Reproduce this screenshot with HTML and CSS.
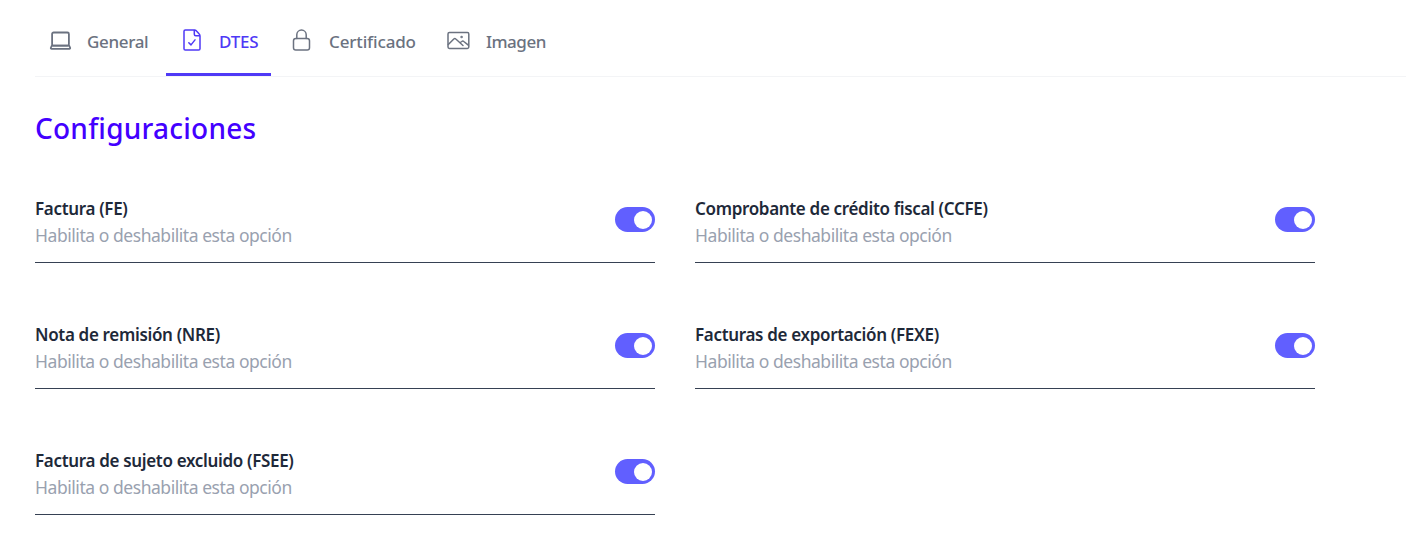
FILE: index.html
```html
<!DOCTYPE html>
<html lang="es">
<head>
<meta charset="utf-8">
<title>Configuraciones</title>
<link rel="stylesheet" href="styles.css">
</head>
<body>
<nav class="tabs">
  <a class="tab tab-general">
    <svg class="icon" viewBox="0 0 24 24"><rect x="4.100" y="4.500" width="16.800" height="13.200" rx="1.500" stroke-width="1.800"/><path d="M3.800 17.700h17.400l1 2.100q.3 1-.8 1H3.600q-1.100 0-.8-1z" stroke-width="1.700"/></svg>
    <span>General</span>
  </a>
  <a class="tab tab-dtes active">
    <svg class="icon" viewBox="0 0 24 24"><path d="M14.800 2H5.300Q4 2 4 3.300v17.400Q4 22 5.300 22h13.400Q20 22 20 20.700V8Q20 6.800 19 5.800L16.500 3Q15.700 2 14.400 2M14.300 2v4.300Q14.300 7.800 15.800 7.800H20M8.800 14.700l2.200 2.200 4-5"/></svg>
    <span>DTES</span>
  </a>
  <a class="tab tab-cert">
    <svg class="icon" viewBox="0 0 24 24"><rect x="3.500" y="10.500" width="16" height="11.500" rx="2.300"/><path d="M6.800 10.500V6.800a4.700 4.700 0 0 1 9.400 0v3.700"/></svg>
    <span>Certificado</span>
  </a>
  <a class="tab tab-img">
    <svg class="icon" viewBox="0 0 24 24"><rect x="2" y="4.500" width="20.800" height="16" rx="1.400"/><path d="M2.300 16.500l5.500-5.500q1-1 2 0l7.200 6.500M14.300 14.500l1.500-1q1-.9 2 0l4.500 3.700"/><circle cx="15.600" cy="9" r=".5"/></svg>
    <span>Imagen</span>
  </a>
</nav>
<main>
  <h1 class="heading">Configuraciones</h1>
  <div class="options">
    <div class="option">
      <div><div class="name">Factura (FE)</div><div class="hint">Habilita o deshabilita esta opción</div></div>
      <span class="toggle"></span>
    </div>
    <div class="option">
      <div><div class="name">Comprobante de crédito fiscal (CCFE)</div><div class="hint">Habilita o deshabilita esta opción</div></div>
      <span class="toggle"></span>
    </div>
    <div class="option">
      <div><div class="name">Nota de remisión (NRE)</div><div class="hint">Habilita o deshabilita esta opción</div></div>
      <span class="toggle"></span>
    </div>
    <div class="option">
      <div><div class="name">Facturas de exportación (FEXE)</div><div class="hint">Habilita o deshabilita esta opción</div></div>
      <span class="toggle"></span>
    </div>
    <div class="option">
      <div><div class="name">Factura de sujeto excluido (FSEE)</div><div class="hint">Habilita o deshabilita esta opción</div></div>
      <span class="toggle"></span>
    </div>
  </div>
</main>
</body>
</html>
```
FILE: styles.css
```css
body {
  margin: 0;
  padding-left: 35px;
  background: #fff;
  font-family: "Segoe UI", "Noto Sans", sans-serif;
  overflow: hidden;
}
.tabs {
  display: flex;
  height: 76px;
  border-bottom: 1px solid #f3f4f6;
}
.tab {
  box-sizing: border-box;
  display: flex;
  gap: 15px;
  height: 76px;
  padding: 29px 0 0 14px;
  color: #6b7280;
  font-size: 17px;
  font-weight: 500;
  line-height: 26px;
  letter-spacing: -0.2px;
  white-space: nowrap;
}
.tab-general { width: 131px; padding-left: 13px; letter-spacing: -0.35px; }
.tab-dtes { width: 105px; }
.tab-cert { width: 161px; padding-left: 19px; letter-spacing: -0.15px; }
.tab-img { padding-left: 14px; gap: 16px; letter-spacing: -0.5px; }
.active {
  color: #4f39f6;
  border-bottom: 3px solid #4f39f6;
}
.icon {
  width: 24px;
  height: 24px;
  flex: none;
  margin-top: -1px;
  fill: none;
  stroke: currentColor;
  stroke-width: 1.5;
  stroke-linecap: round;
  stroke-linejoin: round;
}
.heading {
  margin: 31px 0 0;
  color: #4300ff;
  font-size: 28px;
  font-weight: 500;
  line-height: 40px;
  letter-spacing: 0.23px;
}
.options {
  display: grid;
  grid-template-columns: 620px 620px;
  column-gap: 40px;
  row-gap: 58px;
  margin-top: 47px;
}
.option {
  display: flex;
  justify-content: space-between;
  height: 67px;
  border-bottom: 1px solid #364153;
}
.name, .hint {
  font-size: 17px;
  line-height: 27px;
  white-space: nowrap;
}
.name {
  color: #1e2939;
  font-weight: 600;
  letter-spacing: -0.33px;
}
.hint {
  color: #99a1af;
  font-size: 17.5px;
  font-weight: 400;
  line-height: 26px;
  letter-spacing: -0.45px;
}
.toggle {
  box-sizing: border-box;
  width: 40px;
  height: 25px;
  margin-top: 12px;
  padding: 3.500px 3px 0 19px;
  border-radius: 13px;
  background: #615fff;
}
.toggle::after {
  content: "";
  display: block;
  width: 18px;
  height: 18px;
  border-radius: 50%;
  background: #fff;
}
```
